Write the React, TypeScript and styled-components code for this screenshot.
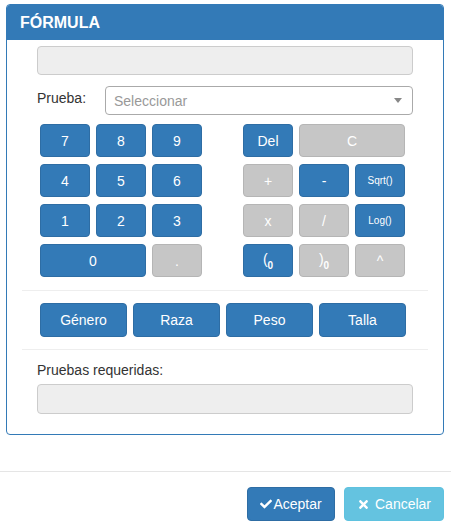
import React from 'react'
import styled, { createGlobalStyle } from 'styled-components'
import { FaCheck, FaTimes } from 'react-icons/fa'

const GlobalStyle = createGlobalStyle`
  body {
    margin: 0;
    background: #fff;
    font-family: "Liberation Sans", Arial, sans-serif;
    font-size: 14px;
    color: #333;
  }
`

const Panel = styled.div`
  margin: 4px 7px 0 6px;
  border: 1px solid #337ab7;
  border-radius: 4px;
  overflow: hidden;
`

const PanelHeader = styled.div`
  height: 35px;
  line-height: 35px;
  padding: 0 13px;
  background: #337ab7;
  color: #fff;
  font-weight: bold;
  font-size: 16px;
`

const PanelBody = styled.div`
  padding: 6px 15px 20px;
`

const Section = styled.div`
  padding: 0 15px;
`

const ReadonlyField = styled.div<{ $height?: number }>`
  height: ${(p) => p.$height ?? 29}px;
  box-sizing: border-box;
  background: #eee;
  border: 1px solid #ccc;
  border-radius: 4px;
`

const SelectRow = styled.div`
  display: flex;
  align-items: center;
  margin-top: 11px;
  height: 29px;
`

const Label = styled.label`
  width: 68px;
  margin-top: -6px;
`

const Select = styled.div`
  flex: 1;
  height: 29px;
  box-sizing: border-box;
  border: 1px solid #aaa;
  border-radius: 4px;
  display: flex;
  align-items: center;
  padding: 0 10px 0 8px;
  color: #999;
  font-size: 14px;
`

const Placeholder = styled.span`
  flex: 1;
`

const Caret = styled.span`
  width: 0;
  height: 0;
  border-left: 4px solid transparent;
  border-right: 4px solid transparent;
  border-top: 5px solid #888;
`

const Keypad = styled.div`
  display: flex;
  margin-top: 9px;
  padding-left: 3px;
  gap: 41px;
`

const KeyGrid = styled.div`
  display: grid;
  grid-template-columns: repeat(3, 50px);
  grid-auto-rows: 33px;
  column-gap: 6px;
  row-gap: 7px;
`

const Key = styled.button<{ $off?: boolean; $span?: number; $small?: boolean }>`
  grid-column: span ${(p) => p.$span ?? 1};
  box-sizing: border-box;
  border-radius: 4px;
  border: 1px solid ${(p) => (p.$off ? '#b5b5b5' : '#2e6da4')};
  background: ${(p) => (p.$off ? '#c6c6c6' : '#337ab7')};
  color: #fff;
  font-family: "Liberation Sans", Arial, sans-serif;
  font-size: ${(p) => (p.$small ? '10px' : '14px')};
  padding: 0;
  cursor: pointer;
`

const Sub = styled.sub`
  font-size: 10px;
  font-weight: bold;
  vertical-align: -5px;
`

const Rule = styled.hr<{ $top: number }>`
  border: 0;
  border-top: 1px solid #eee;
  margin: ${(p) => p.$top}px 0 0;
`

const CategoryRow = styled.div`
  display: flex;
  gap: 6px;
  margin: 12px 0 12px;
  padding-left: 3px;
`

const CategoryButton = styled.button`
  width: 87px;
  height: 34px;
  box-sizing: border-box;
  border: 1px solid #2e6da4;
  border-radius: 4px;
  background: #337ab7;
  color: #fff;
  font-family: "Liberation Sans", Arial, sans-serif;
  font-size: 14px;
  padding: 0;
`

const FieldLabel = styled.div`
  margin-top: 10px;
  line-height: 20px;
  margin-bottom: 4px;
`

const Footer = styled.div`
  margin-top: 36px;
  border-top: 1px solid #e5e5e5;
  padding: 15px 7px 0 0;
  display: flex;
  justify-content: flex-end;
  gap: 9px;
`

const FooterButton = styled.button<{ $variant: 'primary' | 'info' }>`
  height: 34px;
  box-sizing: border-box;
  border-radius: 4px;
  border: 1px solid ${(p) => (p.$variant === 'primary' ? '#2e6da4' : '#5fc2df')};
  background: ${(p) => (p.$variant === 'primary' ? '#337ab7' : '#64c3e0')};
  color: #fff;
  font-family: "Liberation Sans", Arial, sans-serif;
  font-size: 14px;
  display: flex;
  align-items: center;
  justify-content: center;
  gap: ${(p) => (p.$variant === 'primary' ? '1px' : '5px')};
  width: ${(p) => (p.$variant === 'primary' ? '88px' : '100px')};
  padding: 0;
`

const App = () => {
  return (
    <>
      <GlobalStyle />
      <Panel>
        <PanelHeader>FÓRMULA</PanelHeader>
        <PanelBody>
          <Section>
            <ReadonlyField />
            <SelectRow>
              <Label>Prueba:</Label>
              <Select>
                <Placeholder>Seleccionar</Placeholder>
                <Caret />
              </Select>
            </SelectRow>
            <Keypad>
              <KeyGrid>
                <Key>7</Key>
                <Key>8</Key>
                <Key>9</Key>
                <Key>4</Key>
                <Key>5</Key>
                <Key>6</Key>
                <Key>1</Key>
                <Key>2</Key>
                <Key>3</Key>
                <Key $span={2}>0</Key>
                <Key $off>.</Key>
              </KeyGrid>
              <KeyGrid>
                <Key>Del</Key>
                <Key $off $span={2}>C</Key>
                <Key $off>+</Key>
                <Key>-</Key>
                <Key $small>Sqrt()</Key>
                <Key $off>x</Key>
                <Key $off>/</Key>
                <Key $small>Log()</Key>
                <Key>
                  (<Sub>0</Sub>
                </Key>
                <Key $off>
                  )<Sub>0</Sub>
                </Key>
                <Key $off>^</Key>
              </KeyGrid>
            </Keypad>
          </Section>
          <Rule $top={13} />
          <Section>
            <CategoryRow>
              <CategoryButton>Género</CategoryButton>
              <CategoryButton>Raza</CategoryButton>
              <CategoryButton>Peso</CategoryButton>
              <CategoryButton>Talla</CategoryButton>
            </CategoryRow>
          </Section>
          <Rule $top={0} />
          <Section>
            <FieldLabel>Pruebas requeridas:</FieldLabel>
            <ReadonlyField $height={30} />
          </Section>
        </PanelBody>
      </Panel>
      <Footer>
        <FooterButton $variant="primary">
          <FaCheck size={12} />
          Aceptar
        </FooterButton>
        <FooterButton $variant="info">
          <FaTimes size={13} />
          Cancelar
        </FooterButton>
      </Footer>
    </>
  )
}

export default App
